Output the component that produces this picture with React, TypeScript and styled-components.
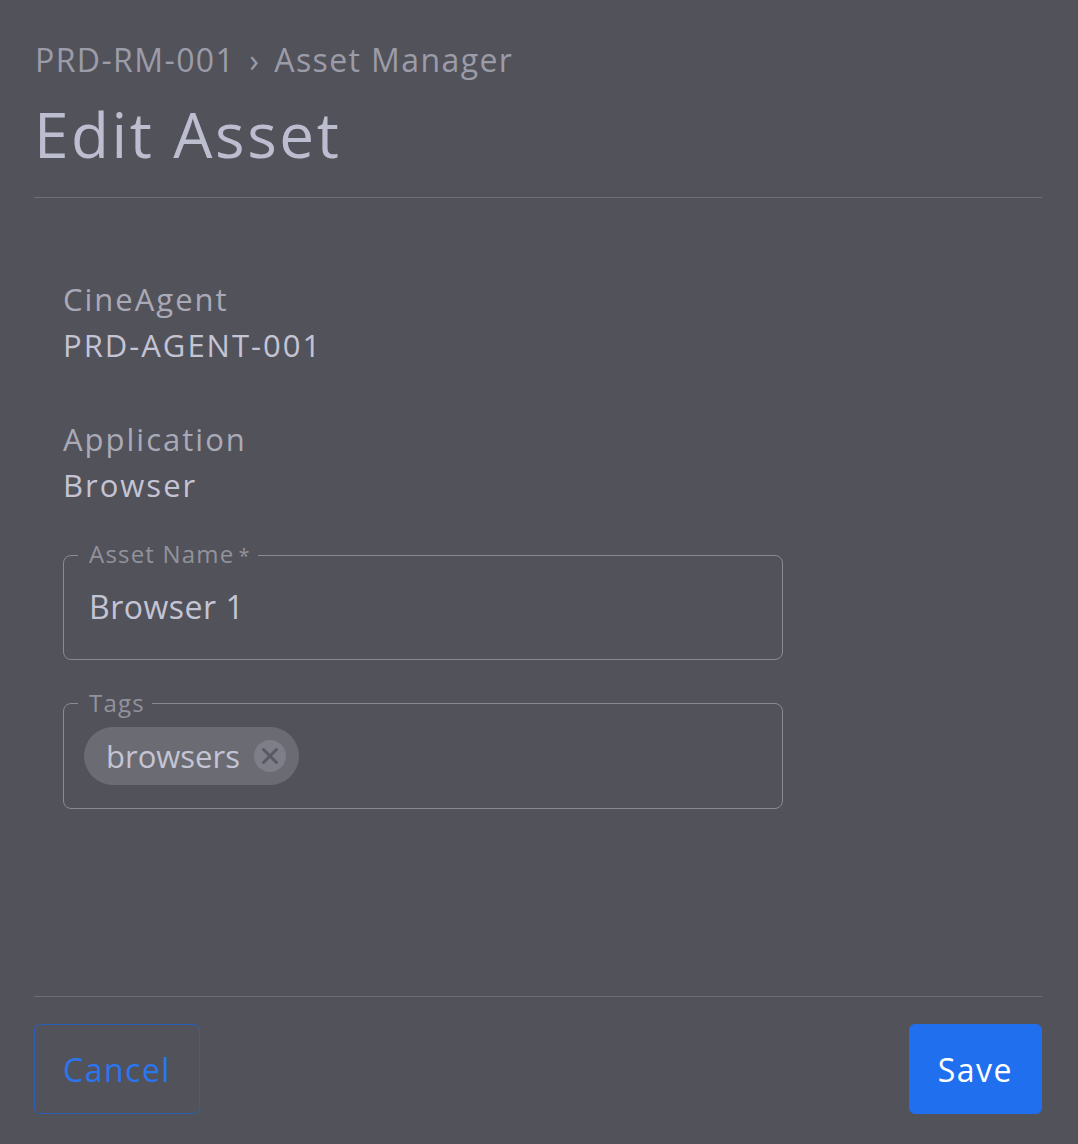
import React from "react";
import styled, { createGlobalStyle } from "styled-components";

const Global = createGlobalStyle`
  html, body { margin: 0; padding: 0; background: #52525b; }
  body { font-family: "Open Sans", "Noto Sans", sans-serif; }
  * { box-sizing: border-box; }
`;

const Page = styled.div`
  min-height: 100vh;
  display: flex;
  flex-direction: column;
  padding: 0 36px 30px 34px;
`;

const Header = styled.header`
  padding-top: 40px;
  border-bottom: 1px solid #6e6e76;
  padding-bottom: 28px;
`;

const Breadcrumb = styled.div`
  font-size: 32px;
  color: #9c9ca8;
  line-height: 40px;
  letter-spacing: 1.4px;
  padding-left: 1px;
  display: flex;
  gap: 14px;
`;

const Title = styled.h1`
  margin: 19px 0 0;
  font-size: 62px;
  font-weight: 400;
  line-height: 70px;
  letter-spacing: 2.6px;
  color: #bdbdd0;
`;

const Body = styled.main`
  flex: 1;
  padding: 81px 29px 0;
  display: flex;
  flex-direction: column;
`;

const InfoList = styled.div`
  display: flex;
  flex-direction: column;
  gap: 54px;
  margin-bottom: 37px;
`;

const Info = styled.div`
  display: flex;
  flex-direction: column;
  gap: 6px;
`;

const InfoLabel = styled.div`
  font-size: 31px;
  line-height: 40px;
  letter-spacing: 2px;
  color: #aaaab6;
`;

const InfoValue = styled.div`
  font-size: 31px;
  line-height: 40px;
  letter-spacing: 2px;
  color: #c4c4d4;
`;

const Field = styled.fieldset`
  margin: 0 0 31px;
  width: 720px;
  height: 118px;
  border: 1px solid #8a8a92;
  border-radius: 8px;
  padding: 0 20px 0 14px;
  min-width: 0;
`;

const Legend = styled.legend`
  font-size: 24px;
  color: #92929c;
  padding: 0 7px 0 11px;
  line-height: 24px;
  letter-spacing: 1.2px;
`;

const Required = styled.span`
  margin-left: 4px;
  font-size: 20px;
`;

const Value = styled.div`
  font-size: 32px;
  line-height: 40px;
  letter-spacing: 0.5px;
  color: #c4c4d4;
  padding-left: 11px;
  margin-top: 19px;
`;

const Chip = styled.div`
  margin-top: 12px;
  margin-left: 6px;
  display: inline-flex;
  align-items: center;
  height: 58px;
  border-radius: 29px;
  background: #6b6c73;
  padding: 0 13px 0 22px;
  gap: 14px;
  font-size: 31px;
  color: #c4c4d4;
`;

const ChipX = styled.span`
  width: 32px;
  height: 32px;
  border-radius: 50%;
  background: #7d7e87;
  display: inline-flex;
  align-items: center;
  justify-content: center;
`;

const Footer = styled.footer`
  border-top: 1px solid #6e6e76;
  padding-top: 27px;
  display: flex;
  justify-content: space-between;
`;

const Button = styled.button<{ $primary?: boolean }>`
  height: 90px;
  padding: 0 28px;
  border-radius: 6px;
  font-family: inherit;
  font-size: 32px;
  letter-spacing: 1.5px;
  cursor: pointer;
  border: 1px solid ${(p) => (p.$primary ? "#1f6fef" : "#2a5fb8")};
  background: ${(p) => (p.$primary ? "#1f6fef" : "transparent")};
  color: ${(p) => (p.$primary ? "#ffffff" : "#2a76f0")};
`;

export default function App() {
  return (
    <>
      <Global />
      <Page>
        <Header>
          <Breadcrumb>
            <span>PRD-RM-001</span>
            <span>›</span>
            <span>Asset Manager</span>
          </Breadcrumb>
          <Title>Edit Asset</Title>
        </Header>
        <Body>
          <InfoList>
            <Info>
              <InfoLabel>CineAgent</InfoLabel>
              <InfoValue>PRD-AGENT-001</InfoValue>
            </Info>
            <Info>
              <InfoLabel>Application</InfoLabel>
              <InfoValue>Browser</InfoValue>
            </Info>
          </InfoList>
          <Field>
            <Legend>
              Asset Name<Required>*</Required>
            </Legend>
            <Value>Browser 1</Value>
          </Field>
          <Field>
            <Legend>Tags</Legend>
            <Chip>
              browsers
              <ChipX>
                <svg width="20" height="20" viewBox="0 0 20 20">
                  <path d="M3.5 3.5 L16.5 16.5 M16.5 3.5 L3.5 16.5" stroke="#585961" strokeWidth="3" strokeLinecap="round" />
                </svg>
              </ChipX>
            </Chip>
          </Field>
        </Body>
        <Footer>
          <Button>Cancel</Button>
          <Button $primary>Save</Button>
        </Footer>
      </Page>
    </>
  );
}
